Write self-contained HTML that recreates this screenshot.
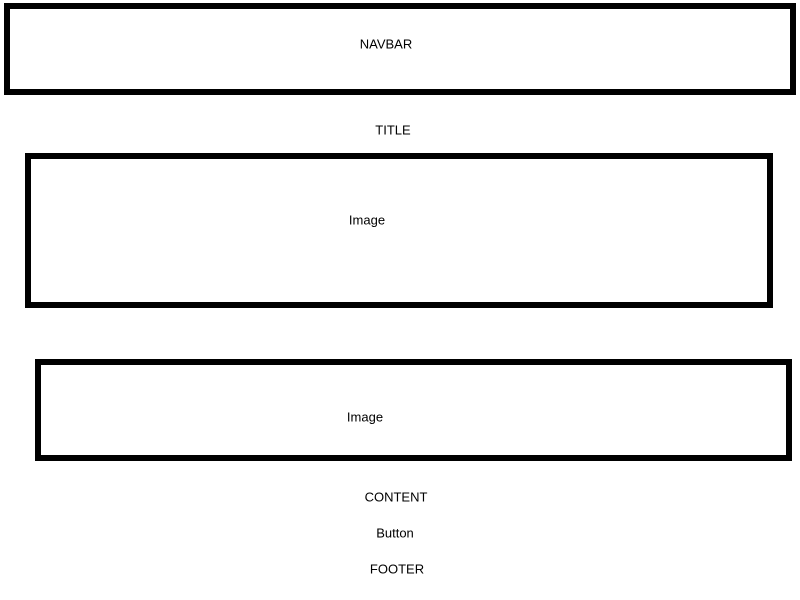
<!DOCTYPE html>
<html><head><style>
body{margin:0;width:800px;height:600px;background:#fff;position:relative;overflow:hidden;font-family:"Liberation Sans",sans-serif;font-size:13px;color:#000}
.b{position:absolute;border:6px solid #000;box-sizing:border-box}
.t{position:absolute;transform:translate(-50%,-50%);white-space:nowrap;line-height:1}
</style></head><body>
<div class="b" style="left:4px;top:3px;width:792px;height:92px"></div>
<div class="b" style="left:25px;top:153px;width:748px;height:155px"></div>
<div class="b" style="left:35px;top:359px;width:757px;height:102px"></div>
<div class="t" style="left:386px;top:44px">NAVBAR</div>
<div class="t" style="left:393px;top:130px">TITLE</div>
<div class="t" style="left:367px;top:220px">Image</div>
<div class="t" style="left:365px;top:417px">Image</div>
<div class="t" style="left:396px;top:497px">CONTENT</div>
<div class="t" style="left:395px;top:533px">Button</div>
<div class="t" style="left:397px;top:569px">FOOTER</div>
</body></html>
